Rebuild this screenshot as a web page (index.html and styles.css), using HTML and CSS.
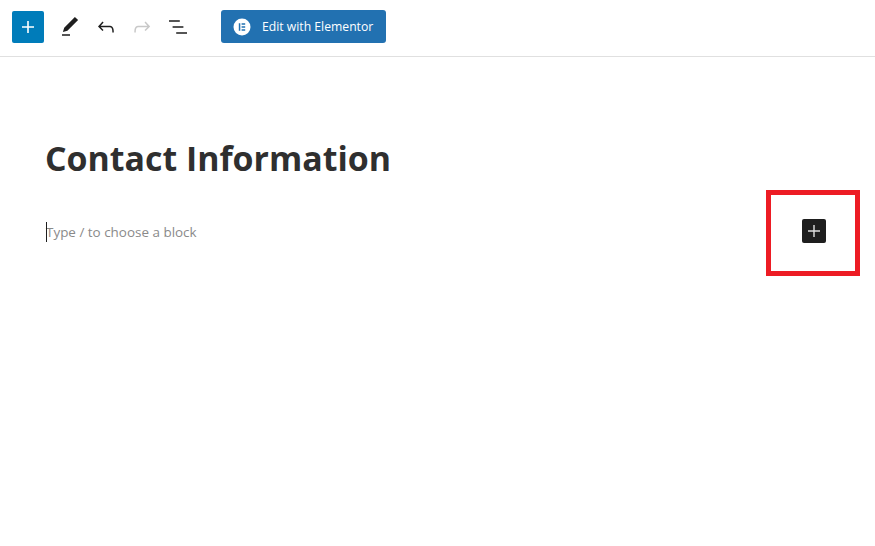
FILE: index.html
```html
<!DOCTYPE html>
<html lang="en">
<head>
<meta charset="utf-8">
<title>Contact Information</title>
<link rel="stylesheet" href="styles.css">
</head>
<body>
<header class="toolbar">
  <button class="add-btn" aria-label="Add block">
    <svg width="24" height="24" viewBox="0 0 24 24"><path d="M18 11.2h-5.2V6h-1.6v5.2H6v1.6h5.2V18h1.6v-5.2H18z" fill="#fff"/></svg>
  </button>
  <div class="tools">
    <span class="tool"><svg width="24" height="24" viewBox="0 0 24 24"><path d="M20.1 5.1 16.9 2 6.2 12.7l-1.3 4.4 4.5-1.3L20.1 5.1zM4 20.8h8v-1.5H4v1.5z" fill="#1e1e1e"/></svg></span>
    <span class="tool"><svg width="24" height="24" viewBox="0 0 24 24"><path d="M18.3 11.7c-.6-.6-1.4-.9-2.3-.9H6.7l2.9-3.3-1.1-1-4.5 5L8.5 16l1-1-2.7-2.7H16c.5 0 .9.2 1.3.5 1 1 1 3.4 1 4.5v.3h1.5v-.2c0-1.5 0-4.3-1.5-5.7z" fill="#1e1e1e"/></svg></span>
    <span class="tool"><svg width="24" height="24" viewBox="0 0 24 24"><path d="M15.6 6.5l-1.1 1 2.9 3.3H8c-.9 0-1.7.3-2.3.9-1.4 1.5-1.4 4.2-1.4 5.7v.2h1.5v-.3c0-1.1 0-3.5 1-4.5.3-.3.7-.5 1.3-.5h9.2L14.5 15l1.1 1.1 4.6-4.6-4.6-5z" fill="#c8c8c8"/></svg></span>
    <span class="tool"><svg width="24" height="24" viewBox="0 0 24 24"><path d="M13.8 5.2H3v1.5h10.8V5.2zM6.6 11.2v1.5h10.8v-1.5H6.6zM10.2 17.3v1.5H21v-1.5H10.2z" fill="#1e1e1e"/></svg></span>
  </div>
  <button class="elementor-btn">
    <svg class="elementor-icon" width="18" height="18" viewBox="0 0 18 18"><circle cx="9" cy="9" r="8.5" fill="#fff"/><path d="M5.8 5.2h1.5v7.6H5.8zM8.6 5.2h3.6v1.5H8.6zM8.6 8.2h3.6v1.5H8.6zM8.6 11.3h3.6v1.5H8.6z" fill="#2271b1"/></svg>
    <span>Edit with Elementor</span>
  </button>
</header>
<main class="content">
  <h1 class="title">Contact Information</h1>
  <div class="block-row">
    <p class="placeholder"><span class="caret"></span>Type / to choose a block</p>
    <button class="inserter" aria-label="Add block">
      <svg width="24" height="24" viewBox="0 0 24 24"><path d="M18 11.3h-5.3V6h-1.4v5.3H6v1.4h5.3V18h1.4v-5.3H18z" fill="#e0e0e0"/></svg>
    </button>
  </div>
  <div class="annotation"></div>
</main>
</body>
</html>
```

FILE: styles.css
```css
* { box-sizing: border-box; }
html, body { margin: 0; padding: 0; }
body {
  width: 875px;
  height: 546px;
  background: #fff;
  font-family: "Open Sans", "Noto Sans", sans-serif;
  overflow: hidden;
}
button { border: 0; padding: 0; font: inherit; }
.toolbar {
  height: 57px;
  display: flex;
  align-items: center;
  padding: 0 0 3px 12px;
  border-bottom: 1px solid #e0e0e0;
}
.add-btn {
  width: 32px;
  height: 32px;
  background: #007cba;
  border-radius: 2px;
  display: flex;
  align-items: center;
  justify-content: center;
}
.tools {
  display: flex;
  gap: 12px;
  margin-left: 14px;
}
.tool { width: 24px; height: 24px; display: block; }
.tool svg { display: block; }
.elementor-btn {
  margin-left: 31px;
  width: 165px;
  height: 33px;
  background: #2271b1;
  border-radius: 3px;
  color: #fff;
  font-size: 12.2px;
  display: flex;
  align-items: center;
  padding-left: 12px;
  gap: 11px;
}
.elementor-icon { flex: none; }
.content {
  position: relative;
  padding: 77px 15px 0 45px;
}
.title {
  margin: 0;
  font-size: 33.9px;
  line-height: 48px;
  font-weight: 700;
  color: #2f2f2f;
}
.block-row {
  margin-top: 30px;
  display: flex;
  align-items: center;
  justify-content: space-between;
  height: 40px;
  padding-left: 1px;
  padding-right: 34px;
}
.placeholder {
  margin: 0;
  position: relative;
  font-size: 13.45px;
  color: #8a8a8a;
}
.caret {
  position: absolute;
  left: 0;
  top: -1px;
  width: 1px;
  height: 20px;
  background: #1e1e1e;
}
.inserter {
  align-self: flex-start;
  margin-top: 7px;
  width: 24px;
  height: 24px;
  background: #1e1e1e;
  border-radius: 2px;
  display: flex;
  align-items: center;
  justify-content: center;
}
.annotation {
  position: absolute;
  left: 766px;
  top: 133px;
  width: 94px;
  height: 86px;
  border: 5px solid #ed1c24;
}
```
